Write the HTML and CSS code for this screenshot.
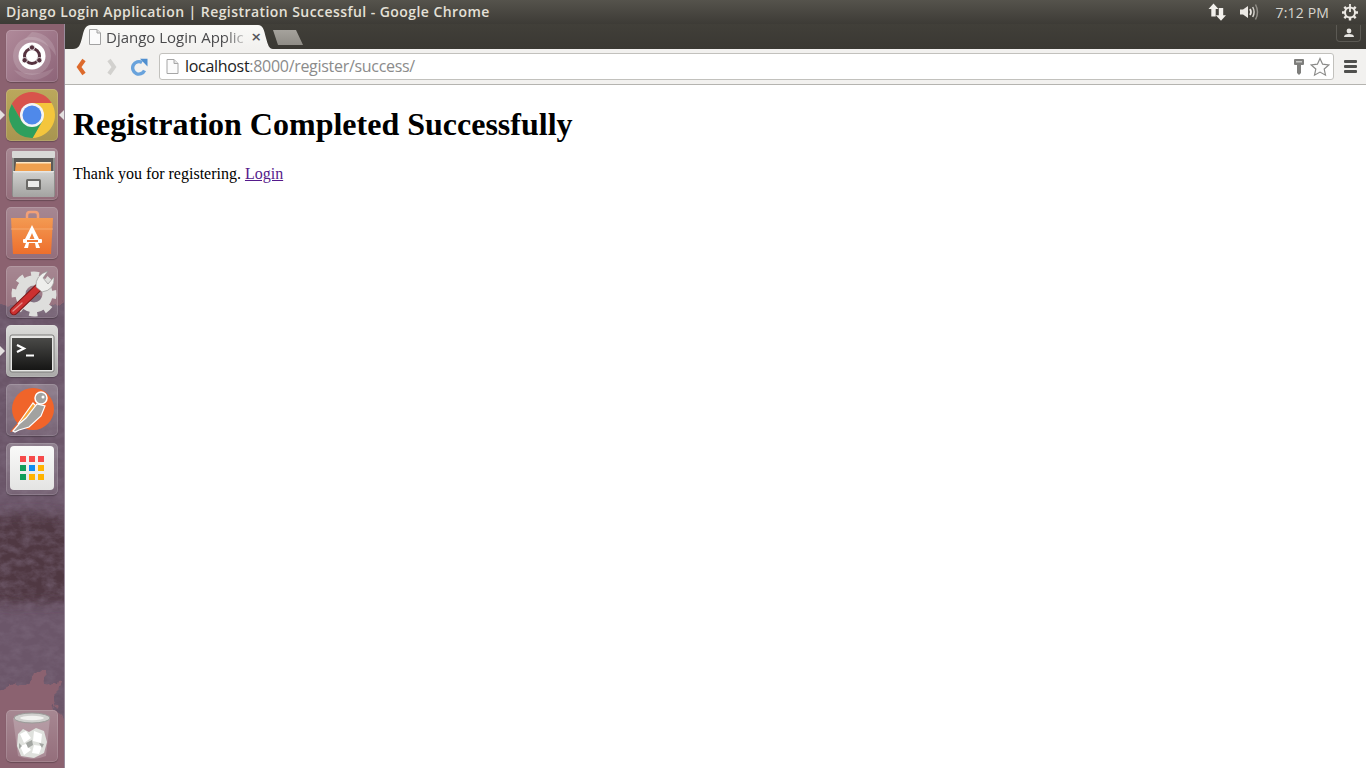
FILE: index.html
```html
<!DOCTYPE html>
<html lang="en">
<head>
<meta charset="utf-8">
<title>Django Login Application | Registration Successful</title>
<link rel="stylesheet" href="styles.css">
</head>
<body>
<header class="topbar">
  <div class="wintitle">Django Login Application | Registration Successful - Google Chrome</div>
  <div class="indicators">
    <svg class="ind ind-net" width="18" height="18" viewBox="0 0 18 18"><path d="M5.500 .5 10.500 6H7.700V13.500H3.300V6H.5Z M13 17.800 7.800 12.300H10.800V5H15.200V12.300H18Z" fill="#f2f0ec"/></svg>
    <svg class="ind ind-vol" width="20" height="18" viewBox="0 0 20 18"><path d="M0 6.500H3L8 3V15L3 11.500H0Z" fill="#ece9e4"/><path d="M10 6Q12 9 10 12" fill="none" stroke="#ece9e4" stroke-width="1.700"/><path d="M12.700 4Q15.500 9 12.700 14" fill="none" stroke="#d4d1cb" stroke-width="1.500"/><path d="M15.500 1.500Q19.500 9 15.500 16.500" fill="none" stroke="#918e88" stroke-width="1.500"/></svg>
    <span class="clock">7:12 PM</span>
    <svg class="ind ind-gear" width="18" height="18" viewBox="0 0 18 18"><circle cx="9" cy="9.500" r="5" fill="none" stroke="#ece9e4" stroke-width="2"/><path d="M3.300 3.800 5.400 5.900M12.600 13.100 14.700 15.200M3.300 15.200 5.400 13.100M12.600 5.900 14.700 3.800M9 14.500V17.500M1 9.500H4M14 9.500H17" stroke="#ece9e4" stroke-width="2.400"/><path d="M9 1V9" stroke="#ece9e4" stroke-width="1.800"/></svg>
  </div>
</header>
<div class="desktop">
  <nav class="launcher">
    <svg class="wallpaper" width="65" height="744" viewBox="0 0 65 744" aria-hidden="true">
      <defs>
        <filter id="rough" x="-40%" y="-10%" width="180%" height="120%"><feTurbulence type="fractalNoise" baseFrequency="0.045" numOctaves="4" seed="3" result="n"/><feDisplacementMap in="SourceGraphic" in2="n" scale="34" xChannelSelector="R" yChannelSelector="G"/></filter>
        <filter id="soft" x="-30%" y="-30%" width="160%" height="160%"><feGaussianBlur stdDeviation="6"/></filter>
        <filter id="mottle" x="0" y="0" width="100%" height="100%"><feTurbulence type="fractalNoise" baseFrequency="0.09 0.14" numOctaves="4" seed="8"/><feColorMatrix values="0 0 0 0 .2  0 0 0 0 .14  0 0 0 0 .2  1.800 0 0 0 -.62"/></filter>
        <filter id="fuzz" x="-10%" y="-10%" width="120%" height="120%"><feGaussianBlur stdDeviation=".7"/></filter>
        <mask id="cloud"><path d="M-30 290 C20 270 45 262 100 300 V700 H62 C56 680 52 665 50 645 C30 650 14 660 -30 680Z" fill="#fff" filter="url(#rough)"/></mask>
      </defs>
      <rect width="65" height="744" fill="#6b5669" mask="url(#cloud)"/>
      <path d="M-20 496 C20 484 45 488 85 496 V580 C44 576 20 586 -20 576Z" fill="#4f3843" filter="url(#soft)"/>
      <rect width="65" height="744" filter="url(#mottle)" mask="url(#cloud)" opacity=".6"/>
    </svg>

    <a class="tile tile-ubuntu">
      <svg width="52" height="52" viewBox="0 0 52 52"><path d="M26 2A24 24 0 0 1 50 26Q40 8 18 10Z" fill="#fff" opacity=".14"/><path d="M48 38A24 24 0 0 1 8 40Q30 48 48 38Z" fill="#fff" opacity=".12"/><circle cx="26" cy="26" r="19" fill="#fff" opacity=".16"/><circle cx="26" cy="26" r="13.500" fill="#fff"/><circle cx="26" cy="26" r="7.500" fill="none" stroke="#55323f" stroke-width="3"/><g fill="#55323f" stroke="#fff" stroke-width=".8"><circle cx="26" cy="17.500" r="2.700"/><circle cx="18.700" cy="30.200" r="2.700"/><circle cx="33.300" cy="30.200" r="2.700"/></g></svg>
    </a>
    <a class="tile tile-chrome is-running is-active">
      <svg width="52" height="52" viewBox="0 0 52 52"><path d="M26 14H45.600A23 23 0 0 0 5.800 15L15.600 32Z" fill="#d8534b"/><path d="M45.600 14A23 23 0 0 1 26.600 49L36.400 32 26 14Z" fill="#f4c63d"/><path d="M5.800 15A23 23 0 0 0 26.600 49L36.400 32H15.600Z" fill="#2f9f5d"/><circle cx="26" cy="26" r="12" fill="#f5f5f5"/><circle cx="26" cy="26" r="9.500" fill="#4f89ea"/></svg>
    </a>
    <a class="tile">
      <svg width="52" height="52" viewBox="0 0 52 52"><defs><linearGradient id="cab" x1="0" y1="0" x2="0" y2="1"><stop offset="0" stop-color="#d2d2d0"/><stop offset="1" stop-color="#a3a3a1"/></linearGradient></defs><rect x="6" y="3" width="43" height="46" rx="2" fill="#8e8e8c"/><rect x="6" y="3" width="43" height="7" rx="1" fill="#d8d8d6"/><rect x="8" y="10" width="39" height="13" fill="#5c5a58"/><path d="M10 14H45V23H9Z" fill="#f0a04f"/><path d="M10 14H45V15.500H10Z" fill="#fde6c4"/><path d="M8 23H47L48 26V49H7V26Z" fill="url(#cab)"/><rect x="7" y="23" width="41" height="1.500" fill="#e6e6e4"/><rect x="20" y="31" width="15" height="11" rx="1.500" fill="#6b6a67"/><rect x="22" y="33" width="11" height="6" fill="#ececea"/></svg>
    </a>
    <a class="tile">
      <svg width="52" height="52" viewBox="0 0 52 52"><defs><linearGradient id="bag" x1="0" y1="0" x2="0" y2="1"><stop offset="0" stop-color="#f39a52"/><stop offset="1" stop-color="#ee6f2d"/></linearGradient></defs><path d="M21 11V8Q21 5 24 5H29Q32 5 32 8V11" fill="none" stroke="#f2a077" stroke-width="2.500"/><path d="M5 11H47L45 47H7Z" fill="url(#bag)"/><path d="M5 22H47" stroke="#f7b37c" stroke-width=".8"/><path d="M26 18 19 32H23.500L26 26 28.500 32H33Z" fill="#fff"/><rect x="17" y="32" width="19" height="4" rx="1" fill="#fff"/><path d="M20 36H23L22 41H18ZM29 36H32L34 41H30Z" fill="#fff"/><rect x="21" y="33" width="11" height="2" fill="#ef7a38"/></svg>
    </a>
    <a class="tile">
      <svg width="52" height="52" viewBox="0 0 52 52"><circle cx="28" cy="28" r="13.500" fill="none" stroke="#dededc" stroke-width="10"/><circle cx="28" cy="28" r="20" fill="none" stroke="#dededc" stroke-width="5" stroke-dasharray="8 7.700" transform="rotate(-10 28 28)"/><path d="M8 45 33 21" stroke="#7d1818" stroke-width="8.500" stroke-linecap="round"/><path d="M8 45 33 21" stroke="#cc3030" stroke-width="6.500" stroke-linecap="round"/><path d="M7 45 16 37" stroke="#e58a86" stroke-width="1.400" stroke-linecap="round"/><path d="M30 21Q29 9 42 5L37 12 42 18 48 11Q49 24 36 26Z" fill="#eeeeec" stroke="#8b8a8a" stroke-width=".6"/></svg>
    </a>
    <a class="tile tile-light is-running">
      <svg width="52" height="52" viewBox="0 0 52 52"><defs><linearGradient id="term" x1="0" y1="0" x2="0" y2="1"><stop offset="0" stop-color="#4a4a48"/><stop offset="1" stop-color="#161615"/></linearGradient></defs><rect x="4" y="10" width="44" height="37" rx="2" fill="#e6e6e4" stroke="#7c7c7a"/><rect x="6" y="13" width="40" height="32" fill="url(#term)"/><path d="M11 20 18 23.500 11 27" fill="none" stroke="#fff" stroke-width="2.200"/><path d="M20 30.500H28" stroke="#fff" stroke-width="2"/></svg>
    </a>
    <a class="tile">
      <svg width="52" height="52" viewBox="0 0 52 52"><circle cx="27" cy="25" r="21" fill="#f0642a"/><path d="M4 48 14 36 22 43Z" fill="#f0642a"/><path d="M12 40 27 19 31 23 22 35Z" fill="#f8a63c" stroke="#fff" stroke-width="1.200"/><path d="M7 47 13 40 20 34 31 20 39 22 35 32 23 43 13 46 9 48Z" fill="#a2a2a0" stroke="#fff" stroke-width="1.200"/><circle cx="35" cy="14" r="6" fill="#a2a2a0" stroke="#fff" stroke-width="1.500"/><circle cx="37" cy="13" r="1.500" fill="#fff"/></svg>
    </a>
    <a class="tile tile-apps">
      <svg width="52" height="52" viewBox="0 0 52 52"><defs><linearGradient id="apps" x1="0" y1="0" x2="0" y2="1"><stop offset="0" stop-color="#fafaf9"/><stop offset="1" stop-color="#e4e4e3"/></linearGradient></defs><rect x="4" y="3" width="44" height="44" rx="4" fill="url(#apps)"/><g fill="#f64a4a"><rect x="14" y="13" width="6" height="6"/><rect x="23" y="13" width="6" height="6"/><rect x="32" y="13" width="6" height="6"/></g><rect x="14" y="22" width="6" height="6" fill="#0f9d58"/><rect x="23" y="22" width="6" height="6" fill="#0d8df2"/><rect x="32" y="22" width="6" height="6" fill="#ffb300"/><rect x="14" y="31" width="6" height="6" fill="#0f9d58"/><rect x="23" y="31" width="6" height="6" fill="#ffb300"/><rect x="32" y="31" width="6" height="6" fill="#ffb300"/></svg>
    </a>
    <a class="tile tile-trash">
      <svg width="52" height="52" viewBox="0 0 52 52"><path d="M7 8 12 46Q26 52 40 46L44 8Z" fill="#fff" opacity=".2"/><ellipse cx="26" cy="8" rx="18" ry="5" fill="#d0d0ce" stroke="#9a9a98"/><ellipse cx="26" cy="8" rx="12" ry="2.200" fill="#f2f2f0"/><g filter="url(#fuzz)"><path d="M12 24 17 19 23 22 30 18 38 21 41 32 38 43 28 48 15 46 11 36Z" fill="#dfe1dd"/><path d="M14 24 20 21 25 28 18 33ZM28 21 36 24 35 33 27 31ZM14 36 20 34 25 40 18 45ZM28 35 36 36 33 44 26 43Z" fill="#fff"/><path d="M20 33 26 30 27 35 22 38ZM13 33 16 36 13 39ZM33 33 38 34 36 38Z" fill="#a3a6a2"/></g></svg>
    </a>
  </nav>

  <main class="browser">
    <div class="tabstrip">
      <div class="tab">
        <svg class="favicon" width="14" height="16" viewBox="0 0 14 16"><path d="M1.500 .5H9L12.500 4V15.500H1.500Z" fill="#fbfbfb" stroke="#a2a2a2"/><path d="M9 .5V4H12.500" fill="#e4e4e4" stroke="#a2a2a2"/></svg>
        <span class="tab-title">Django Login Applic</span>
        <span class="tab-close">×</span>
      </div>
      <div class="newtab"></div>
      <div class="profile">
        <svg width="12" height="10" viewBox="0 0 12 10"><circle cx="6" cy="3" r="2.400" fill="#e6e4e0"/><path d="M1 9Q1 6 6 6T11 9Z" fill="#e6e4e0"/></svg>
      </div>
    </div>
    <div class="toolbar">
      <svg class="nav nav-back" width="14" height="18" viewBox="0 0 14 18"><path d="M11 2 6 9 11 16" fill="none" stroke="#dd6a2c" stroke-width="4"/></svg>
      <svg class="nav nav-fwd" width="14" height="18" viewBox="0 0 14 18"><path d="M4 2 9 9 4 16" fill="none" stroke="#d2d1ce" stroke-width="4"/></svg>
      <svg class="nav nav-reload" width="18" height="18" viewBox="0 0 18 18"><path d="M13.500 12.500A6.200 6.200 0 1 1 11 4.500" fill="none" stroke="#69a3dc" stroke-width="3.400"/><path d="M9 .8 16.500 .8V8.500Z" fill="#4f8fcf"/></svg>
      <div class="omnibox">
        <svg class="favicon" width="13" height="15" viewBox="0 0 13 15"><path d="M1 .5H8L12 4.500V14.500H1Z" fill="#fbfbfb" stroke="#a6a6a6"/><path d="M8 .5V4.500H12" fill="#e4e4e4" stroke="#a6a6a6"/></svg>
        <span class="url"><span class="host">localhost</span>:8000/register/success/</span>
        <svg class="key" width="12" height="18" viewBox="0 0 12 18"><path d="M2 1H10Q11 1 11 2V6Q11 7 10 7H8V15L6 17 4 15V7H2Q1 7 1 6V2Q1 1 2 1Z" fill="#7e7e7c"/><rect x="3" y="3" width="6" height="1.500" fill="#c8c8c6"/></svg>
        <svg class="star" width="20" height="20" viewBox="0 0 20 20"><path d="M10 1.500 12.600 7.200 18.800 7.900 14.200 12 15.500 18.200 10 15.100 4.500 18.200 5.800 12 1.200 7.900 7.400 7.200Z" fill="#fdfdfd" stroke="#8a8a88" stroke-width="1.200"/></svg>
      </div>
      <div class="menu"><i></i><i></i><i></i></div>
    </div>
    <div class="page">
      <h1>Registration Completed Successfully</h1>
      <p>Thank you for registering. <a href="#" class="visited">Login</a></p>
    </div>
  </main>
</div>
</body>
</html>
```
FILE: styles.css
```css
* { box-sizing: border-box; }
html, body { margin: 0; height: 100%; overflow: hidden; }
body { display: flex; flex-direction: column; width: 1366px; height: 768px; background: #fff; }

.topbar {
  height: 24px; flex: none; display: flex; align-items: center; justify-content: space-between;
  padding: 0 7px 0 6px;
  background: linear-gradient(#55534c, #3d3b36);
}
.wintitle { margin-bottom: 2px; font: 600 14px "Open Sans", sans-serif; color: #e4e0d7; white-space: nowrap; letter-spacing: .44px; }
.indicators { display: flex; align-items: center; }
.ind { display: block; }
.ind-vol { margin-left: 14px; }
.ind-gear { margin-left: 12px; }
.clock { margin-left: 16px; font: 400 14px "Open Sans", sans-serif; color: #d8d5ce; white-space: nowrap; letter-spacing: .15px; }

.desktop { flex: 1; display: flex; min-height: 0; }

.launcher {
  position: relative; width: 65px; flex: none;
  display: flex; flex-direction: column; gap: 7px; padding: 6px 0 6px 6px;
  background: #8b6270; border-right: 1px solid #9a8c9c; overflow: hidden;
}
.wallpaper { position: absolute; left: 0; top: 0; }
.tile {
  position: relative; display: block; width: 52px; height: 52px; flex: none; border-radius: 5px;
  background: linear-gradient(rgba(255,255,255,.24), rgba(255,255,255,.08));
  box-shadow: inset 0 0 0 1px rgba(255,255,255,.14), 0 1px 1px rgba(0,0,0,.25);
}
.tile svg { display: block; }
.tile-ubuntu { background: linear-gradient(135deg, #b08a9a, #8d6478); }
.tile-chrome { background: linear-gradient(#bba85c, #a89550); }
.tile-light { background: linear-gradient(#dcdcda, #aaa9a8); }
.tile-trash { margin-top: auto; }
.tile.is-running::before {
  content: ""; position: absolute; left: -6px; top: 21px;
  border-left: 5px solid #e4e0e0; border-top: 5px solid transparent; border-bottom: 5px solid transparent;
}
.tile.is-active::after {
  content: ""; position: absolute; right: -6px; top: 21px;
  border-right: 5px solid #e4e0e0; border-top: 5px solid transparent; border-bottom: 5px solid transparent;
}

.browser { flex: 1; min-width: 0; display: flex; flex-direction: column; }

.tabstrip {
  position: relative; height: 25px; flex: none; display: flex; align-items: flex-end; padding-left: 8px;
  background: linear-gradient(#413f39, #3a3833);
}
.tab {
  width: 200px; height: 25px; flex: none; display: flex; align-items: center; padding: 0 0 0 15px;
  background: linear-gradient(#fafaf8, #f2f1ef);
  clip-path: path("M0 25C6 25 7 21 9 14C11 6 12 1 18 1H185C190 1 191 6 193 14C195 21 196 25 200 25Z");
}
.tab .favicon { display: block; flex: none; margin-top: 1px; }
.tab-title {
  margin-left: 4px; flex: none; white-space: nowrap;
  font: 400 15px "Open Sans", sans-serif; color: #4a4a4c;
  -webkit-mask-image: linear-gradient(90deg, #000 86%, rgba(0,0,0,.25) 100%);
  mask-image: linear-gradient(90deg, #000 86%, rgba(0,0,0,.25) 100%);
}
.tab-close { margin-left: 7px; font: 700 13px "DejaVu Sans", sans-serif; color: #55555a; line-height: 1; }
.newtab {
  width: 30px; height: 15px; margin: 0 0 4px 0; background: linear-gradient(#a5a29c, #8f8c86);
  clip-path: polygon(0 0, 23px 0, 30px 100%, 5px 100%);
}
.profile {
  position: absolute; right: 5px; top: 1px; width: 25px; height: 17px;
  display: flex; align-items: center; justify-content: center;
  border: 1px solid #5c5a54; border-top: 0; border-radius: 0 0 4px 4px;
}
.profile svg { display: block; }

.toolbar {
  height: 36px; flex: none; display: flex; align-items: center; padding: 0 6px 0 8px;
  background: #f2f1ef; border-bottom: 1px solid #b5b4b0;
}
.nav { display: block; flex: none; }
.nav-fwd { margin-left: 18px; }
.nav-reload { margin-left: 12px; }
.omnibox {
  width: 1175px; height: 27px; margin-left: 10px; display: flex; align-items: center; padding: 0 3px 0 6px;
  background: #fff; border: 1px solid #c2c1bd; border-radius: 3px;
}
.omnibox .favicon { display: block; flex: none; }
.url { margin: 0 0 2px 6px; flex: 1; font: 400 16px "Open Sans", sans-serif; color: #8b8b8b; white-space: nowrap; letter-spacing: -.3px; }
.host { color: #222; }
.key { display: block; margin-right: 5px; }
.star { display: block; }
.menu { margin-left: 10px; width: 13px; display: flex; flex-direction: column; gap: 2px; }
.menu i { display: block; height: 3px; background: #4f4f4d; border-radius: 1px; }

.page { flex: 1; padding: 0 8px; font-family: "Liberation Serif", "Times New Roman", serif; font-size: 16px; color: #000; overflow: hidden; }
.page h1 { font-size: 32px; font-weight: 700; margin: 21.44px 0; }
.page p { margin: 16px 0; }
.visited { color: #551a8b; }
```
